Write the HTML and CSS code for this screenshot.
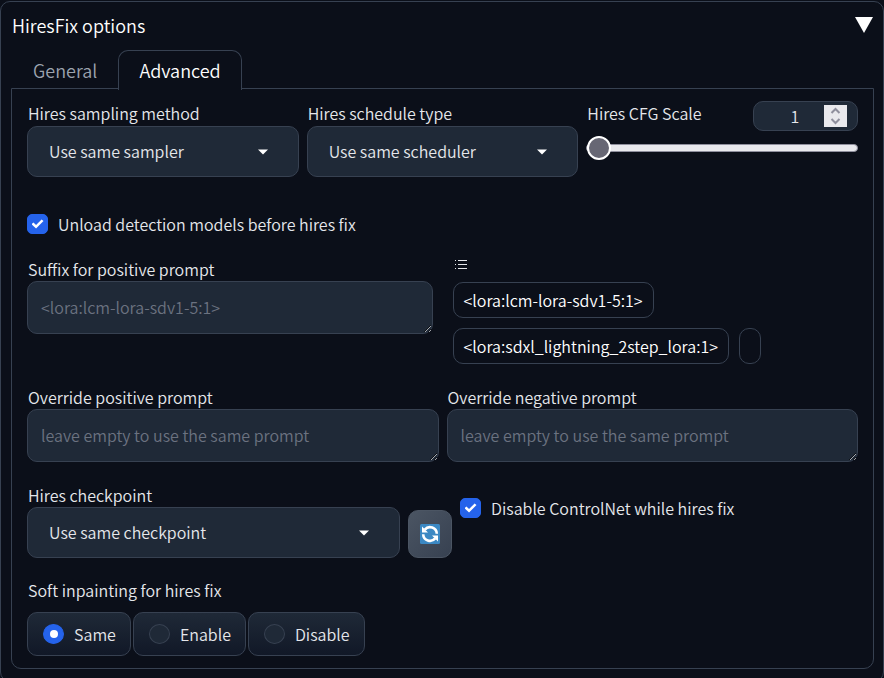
FILE: index.html
```html
<!DOCTYPE html>
<html lang="en">
<head>
<meta charset="utf-8">
<title>HiresFix options</title>
<link rel="stylesheet" href="styles.css">
</head>
<body>
<main class="card">
  <button class="card-header" type="button" aria-expanded="true">
    <span>HiresFix options</span>
    <svg class="disclosure" viewBox="0 0 18 16" aria-hidden="true"><path d="M0 0H18L9 16Z"/></svg>
  </button>

  <div class="tabs" role="tablist">
    <button class="tab" type="button" role="tab" aria-selected="false">General</button>
    <button class="tab tab-active" type="button" role="tab" aria-selected="true">Advanced</button>
  </div>

  <section class="panel" role="tabpanel">
    <div class="row thirds">
      <div class="field">
        <label for="sampler">Hires sampling method</label>
        <div class="select-box">
          <select id="sampler"><option>Use same sampler</option></select>
          <svg class="caret" viewBox="0 0 18 18" aria-hidden="true"><path d="M4 6.500H14L9 11.500Z"/></svg>
        </div>
      </div>
      <div class="field">
        <label for="scheduler">Hires schedule type</label>
        <div class="select-box">
          <select id="scheduler"><option>Use same scheduler</option></select>
          <svg class="caret" viewBox="0 0 18 18" aria-hidden="true"><path d="M4 6.500H14L9 11.500Z"/></svg>
        </div>
      </div>
      <div class="field">
        <div class="scale-head">
          <label for="cfg">Hires CFG Scale</label>
          <div class="number-box">
            <input id="cfg" type="number" value="1">
            <svg class="stepper" viewBox="0 0 23 22" aria-hidden="true"><path d="M7.500 8L11.500 4L15.500 8M7.500 14L11.500 18L15.500 14"/></svg>
          </div>
        </div>
        <input class="slider" type="range" min="1" max="30" value="1" aria-label="Hires CFG Scale">
      </div>
    </div>

    <label class="check unload">
      <input type="checkbox" checked>
      <span>Unload detection models before hires fix</span>
    </label>

    <div class="row suffix">
      <div class="field">
        <label for="suffix">Suffix for positive prompt</label>
        <textarea id="suffix" rows="1" placeholder="&lt;lora:lcm-lora-sdv1-5:1&gt;"></textarea>
      </div>
      <div class="samples">
        <svg class="list-icon" viewBox="0 0 14 14" aria-hidden="true"><path d="M4 3.500H13M4 7.500H13M4 11.500H13M1 3.500H2M1 7.500H2M1 11.500H2"/></svg>
        <div class="chips">
          <button class="chip" type="button">&lt;lora:lcm-lora-sdv1-5:1&gt;</button>
          <button class="chip" type="button">&lt;lora:sdxl_lightning_2step_lora:1&gt;</button>
          <button class="chip" type="button" aria-label="Empty"></button>
        </div>
      </div>
    </div>

    <div class="row halves">
      <div class="field">
        <label for="positive">Override positive prompt</label>
        <textarea id="positive" rows="1" placeholder="leave empty to use the same prompt"></textarea>
      </div>
      <div class="field">
        <label for="negative">Override negative prompt</label>
        <textarea id="negative" rows="1" placeholder="leave empty to use the same prompt"></textarea>
      </div>
    </div>

    <div class="row checkpoint">
      <div class="field">
        <label for="checkpoint">Hires checkpoint</label>
        <div class="select-box">
          <select id="checkpoint"><option>Use same checkpoint</option></select>
          <svg class="caret" viewBox="0 0 18 18" aria-hidden="true"><path d="M4 6.500H14L9 11.500Z"/></svg>
        </div>
      </div>
      <button class="refresh" type="button" aria-label="Refresh">
        <svg viewBox="0 0 20 20" aria-hidden="true">
          <rect width="20" height="20" rx="1.500" fill="#3b88c3"/>
          <g fill="none" stroke="#fff" stroke-width="2.600">
            <path d="M4.800 5.600A6.800 6.800 0 0 1 16.800 9.800"/>
            <path d="M15.200 14.400A6.800 6.800 0 0 1 3.200 10.200"/>
          </g>
          <path fill="#fff" d="M2 2.600V8.600H8ZM18 17.400V11.400H12Z"/>
        </svg>
      </button>
      <label class="check">
        <input type="checkbox" checked>
        <span>Disable ControlNet while hires fix</span>
      </label>
    </div>

    <fieldset class="soft">
      <legend>Soft inpainting for hires fix</legend>
      <div class="radios">
        <label class="radio"><input type="radio" name="soft" checked><span>Same</span></label>
        <label class="radio"><input type="radio" name="soft"><span>Enable</span></label>
        <label class="radio"><input type="radio" name="soft"><span>Disable</span></label>
      </div>
    </fieldset>
  </section>
</main>
</body>
</html>
```
FILE: styles.css
```css
:root {
  --bg: #0b0f19;
  --field: #1f2937;
  --line: #374151;
  --text: #e5e7eb;
  --accent: #2563eb;
}

* { box-sizing: border-box; }

body {
  margin: 0;
  padding-top: 1px;
  height: 100vh;
  overflow: hidden;
  background: var(--bg);
  color: var(--text);
  font: 330 16px/24px "Noto Sans CJK SC", "Noto Sans", sans-serif;
}

button, input, select, textarea {
  font: inherit;
  color: inherit;
  margin: 0;
}

.card {
  border: 1px solid var(--line);
  border-radius: 10px;
  padding: 11px 9px 12px 10px;
}

.card-header {
  display: flex;
  justify-content: space-between;
  align-items: center;
  width: 100%;
  padding: 0 1px;
  border: 0;
  background: none;
  color: #fff;
  font-size: 18px;
}

.disclosure {
  width: 18px;
  height: 16px;
  fill: #fff;
}

.tabs {
  display: flex;
  margin-top: 13px;
}

.tab {
  height: 39px;
  padding: 0 20px 1px 21px;
  border: 1px solid transparent;
  border-bottom: 0;
  border-radius: 10px 10px 0 0;
  background: none;
  color: #9ca3af;
  font-size: 18px;
}

.tab-active {
  margin-bottom: -1px;
  height: 40px;
  padding: 0 20px 2px;
  border-color: var(--line);
  background: var(--bg);
  color: #fff;
  z-index: 1;
}

.panel {
  border: 1px solid var(--line);
  border-radius: 0 0 10px 10px;
  margin-top: -1px;
  padding: 12px 15px;
}

.row {
  display: grid;
  gap: 8px;
  margin-top: 21px;
}

.thirds {
  grid-template-columns: repeat(3, minmax(0, 1fr));
  margin-top: 0;
}

.thirds .select-box { margin-top: 1px; }

.halves { grid-template-columns: repeat(2, minmax(0, 1fr)); }

.suffix { grid-template-columns: minmax(0, 1fr) minmax(0, 1fr); gap: 20px; }

.checkpoint { grid-template-columns: 373px 44px minmax(0, 1fr); }

.field > label { display: block; padding-left: 1px; }

.scale-head label { padding-left: 1px; }

.select-box { display: grid; align-items: center; }

.select-box > * { grid-area: 1 / 1; }

select, textarea {
  display: block;
  width: 100%;
  border: 1px solid var(--line);
  border-radius: 10px;
  background: var(--field);
}

select {
  appearance: none;
  height: 51px;
  padding: 0 21px 1px;
}

.caret {
  width: 18px;
  height: 18px;
  margin-right: 27px;
  justify-self: end;
  fill: #fff;
  pointer-events: none;
}

textarea {
  height: 53px;
  padding: 13px;
  resize: vertical;
}

textarea::placeholder { color: #6b7280; }

.scale-head {
  display: flex;
  justify-content: space-between;
}

.number-box {
  display: flex;
  align-items: center;
  width: 105px;
  height: 30px;
  padding-right: 10px;
  border: 1px solid var(--line);
  border-radius: 10px;
  background: var(--field);
}

.number-box input {
  flex: 1;
  min-width: 0;
  padding: 0 0 0 12px;
  border: 0;
  background: none;
  text-align: center;
  appearance: textfield;
}

.number-box input::-webkit-inner-spin-button { appearance: none; display: none; }

.stepper {
  width: 23px;
  height: 22px;
  background: #e9e9ed;
  fill: none;
  stroke: #8f8f9d;
  stroke-width: 2;
}

.slider {
  display: block;
  width: 100%;
  height: 24px;
  margin-top: 5px;
  appearance: none;
  background: none;
}

.slider::-webkit-slider-runnable-track {
  height: 8px;
  border: 1px solid #8f8f9d;
  border-radius: 4px;
  background: #e9e9ed;
}

.slider::-webkit-slider-thumb {
  appearance: none;
  width: 24px;
  height: 24px;
  margin-top: -9px;
  border: 2px solid #fff;
  border-radius: 50%;
  background: #676774;
}

.check {
  display: flex;
  align-items: center;
  gap: 10px;
}

.unload { margin-top: 35px; }

.check input, .radio input {
  appearance: none;
  display: grid;
  place-items: center;
  flex: none;
  width: 21px;
  height: 20px;
  border: 1px solid var(--line);
  background: var(--field);
}

.check input { border-radius: 5px; }

.radio input { border-radius: 50%; }

.check input:checked, .radio input:checked {
  border-color: var(--accent);
  background: var(--accent);
}

.check input:checked::before {
  content: "";
  width: 12px;
  height: 10px;
  background: #fff;
  clip-path: polygon(0 52%, 16% 36%, 38% 60%, 84% 4%, 100% 20%, 38% 96%);
}

.radio input:checked::before {
  content: "";
  width: 8px;
  height: 8px;
  border-radius: 50%;
  background: #fff;
}

.list-icon {
  display: block;
  width: 14px;
  height: 14px;
  margin-left: 1px;
  fill: none;
  stroke: var(--text);
}

.chips {
  display: flex;
  flex-wrap: wrap;
  gap: 10px;
  margin-top: 11px;
}

.chip {
  height: 36px;
  padding: 0 10px;
  border: 1px solid var(--line);
  border-radius: 10px;
  background: none;
  color: #fff;
}

.refresh {
  display: grid;
  place-items: center;
  align-self: end;
  height: 48px;
  padding: 0;
  border: 1px solid #4b5563;
  border-radius: 10px;
  background: linear-gradient(to bottom right, #4b5563, #374151);
}

.refresh svg { width: 20px; height: 20px; }

.checkpoint .check { align-self: start; margin-top: 13px; }

.soft {
  margin: 20px 0 0;
  padding: 0;
  border: 0;
}

.soft legend { padding: 0 0 0 1px; }

.radios {
  display: flex;
  gap: 2px;
  margin-top: 10px;
}

.radio {
  display: flex;
  align-items: center;
  gap: 10px;
  height: 44px;
  padding: 0 14px 0 15px;
  border: 1px solid var(--line);
  border-radius: 10px;
  background: linear-gradient(#1f2937, #111827);
}
```
